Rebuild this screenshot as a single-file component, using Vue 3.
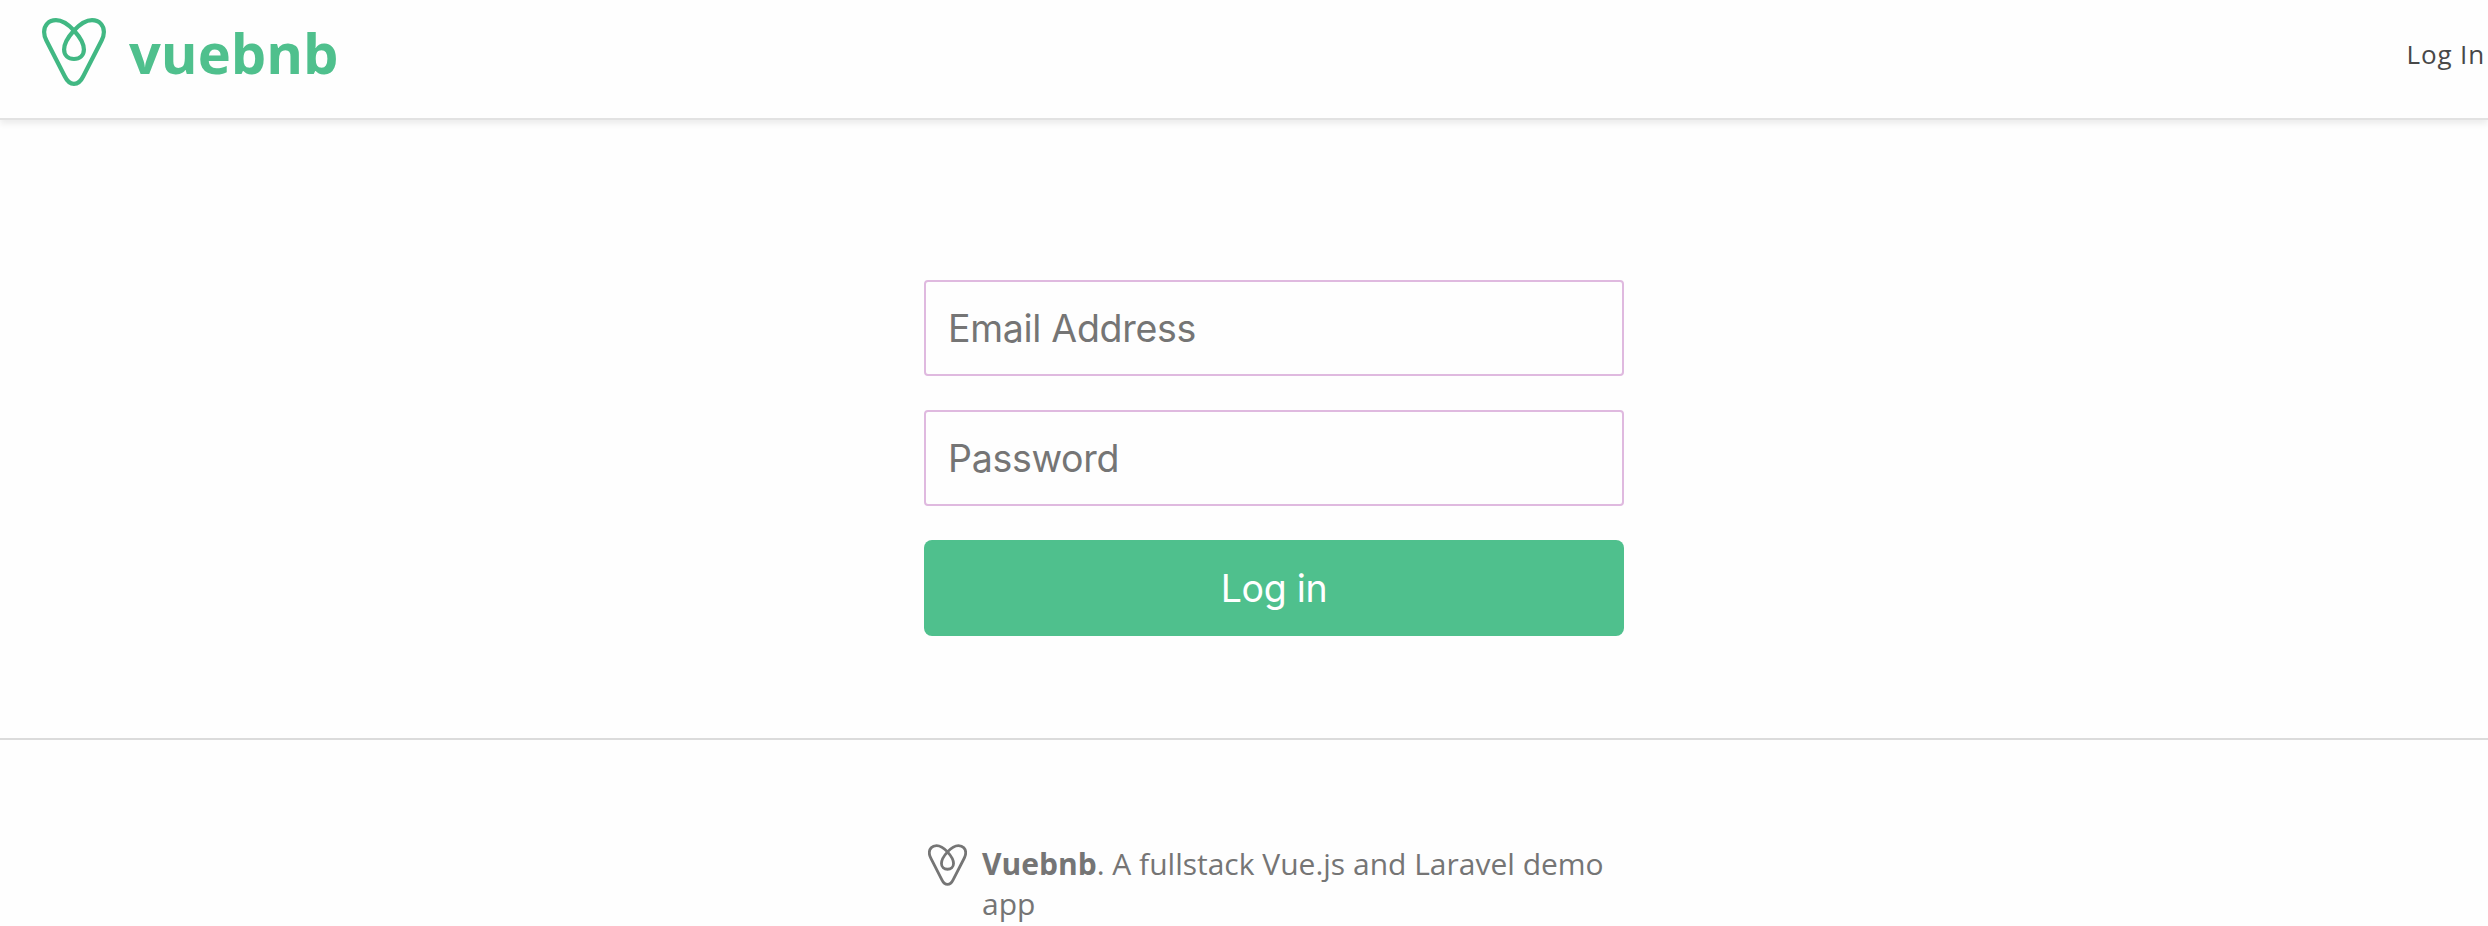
<script setup>
import { ref } from 'vue'

const email = ref('')
const password = ref('')
const heart =
  'M32 12.5 C26.5 6.5 20.5 2.1 14 2.1 C6.5 2.1 2.1 7.5 2.1 14 C2.1 17 3 19.7 4.4 22.5 L22.6 58 C25 63 28 65.8 32 65.8 C36 65.8 39 63 41.4 58 L59.6 22.5 C61 19.7 61.9 17 61.9 14 C61.9 7.5 57.5 2.1 50 2.1 C43.5 2.1 37.5 6.5 32 12.5 C27 18 22.1 25 22.1 31.5 C22.1 37.5 26.4 41 32 41 C37.6 41 41.9 37.5 41.9 31.5 C41.9 25 37 18 32 12.5 Z'
</script>

<template>
  <div class="page">
    <header class="toolbar">
      <a class="brand">
        <svg class="brand-icon" viewBox="0 0 64 68"><path :d="heart" /></svg>
        <h1 class="brand-name">vuebnb</h1>
      </a>
      <a class="login-link">Log In</a>
    </header>
    <main class="content">
      <form class="login-form" @submit.prevent>
        <input v-model="email" class="field" type="email" placeholder="Email Address" />
        <input v-model="password" class="field" type="password" placeholder="Password" />
        <button class="submit" type="submit">Log in</button>
      </form>
    </main>
    <footer class="footer">
      <div class="footer-inner">
        <svg class="footer-icon" viewBox="0 0 64 68"><path :d="heart" /></svg>
        <p class="footer-text"><strong>Vuebnb</strong>. A fullstack Vue.js and Laravel demo app</p>
      </div>
    </footer>
  </div>
</template>

<style>
body {
  margin: 0;
  background: #fefefe;
  overflow: hidden;
}
</style>

<style scoped>
.page {
  height: 926px;
  overflow: hidden;
  background: #fefefe;
  font-family: "Open Sans", sans-serif;
  color: #484848;
}
.toolbar {
  box-sizing: border-box;
  height: 120px;
  display: flex;
  justify-content: space-between;
  align-items: flex-start;
  padding: 18px 3px 0 42px;
  border-bottom: 2px solid #e2e2e2;
  box-shadow: 0 4px 6px rgba(0, 0, 0, 0.07);
}
.brand {
  display: flex;
}
.brand-icon {
  width: 64px;
  height: 68px;
}
.brand-icon path {
  fill: none;
  stroke: #41b883;
  stroke-width: 4.2;
}
.brand-name {
  margin: -4px 0 0 23px;
  font-size: 56px;
  line-height: 76px;
  font-weight: 700;
  color: #4fc08d;
}
.login-link {
  margin-top: 16px;
  font-size: 26px;
  line-height: 40px;
  letter-spacing: 0.85px;
}
.content {
  box-sizing: border-box;
  height: 618px;
  padding: 160px 0 0 924px;
}
.login-form {
  width: 700px;
  display: flex;
  flex-direction: column;
  gap: 34px;
}
.field,
.submit {
  box-sizing: border-box;
  width: 100%;
  height: 96px;
  margin: 0;
  font-family: Inter, sans-serif;
  font-size: 37.5px;
  font-weight: 400;
  letter-spacing: -0.3px;
}
.field {
  padding: 0 22px;
  border: 2px solid #dfb9df;
  border-radius: 4px;
  background: #fefefe;
  color: #484848;
  outline: none;
}
.field::placeholder {
  color: #757575;
  opacity: 1;
}
.submit {
  padding: 0;
  border: none;
  border-radius: 8px;
  background: #4fc08d;
  color: #fff;
}
.footer {
  border-top: 2px solid #dbdbdb;
  padding: 104px 0 0 928px;
}
.footer-inner {
  display: flex;
  gap: 15px;
  width: 696px;
}
.footer-icon {
  flex: none;
  width: 39px;
  height: 42px;
}
.footer-icon path {
  fill: none;
  stroke: #757575;
  stroke-width: 4.6;
}
.footer-text {
  margin: 0;
  font-size: 30px;
  line-height: 40px;
  color: #757575;
}
</style>
